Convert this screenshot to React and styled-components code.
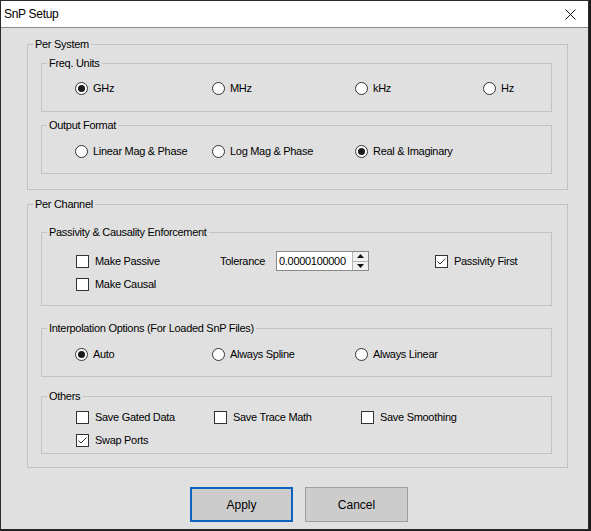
import React from "react";
import styled, { createGlobalStyle } from "styled-components";

const GlobalStyle = createGlobalStyle`
  html, body {
    margin: 0;
    padding: 0;
    background: #1c1c1c;
  }
  body {
    font-family: "Liberation Sans", Arial, sans-serif;
  }
`;

const Window = styled.div`
  width: 587px;
  height: 528px;
  border: 1px solid #2a2a2a;
  background: #e0e0e0;
  display: flex;
  flex-direction: column;
`;

const TitleBar = styled.div`
  height: 26px;
  background: #ffffff;
  border-bottom: 1px solid #8c8c8c;
  display: flex;
  align-items: center;
  justify-content: space-between;
  padding: 0 0 0 3px;
`;

const Title = styled.span`
  font-family: "Liberation Sans", Arial, sans-serif;
  font-size: 12px;
  letter-spacing: -0.3px;
  color: #000;
`;

const CloseButton = styled.div`
  width: 28px;
  height: 26px;
  display: flex;
  align-items: center;
  justify-content: center;
  margin-right: 4px;
`;

const Client = styled.div`
  flex: 1;
  display: flex;
  flex-direction: column;
  padding-top: 10px;
`;

const Group = styled.fieldset`
  margin: ${(p) => p.$top}px ${(p) => (p.$inner ? 15 : 20)}px 0
    ${(p) => (p.$inner ? 13 : 26)}px;
  padding: ${(p) => p.$padTop || 0}px 0 ${(p) => p.$padBottom || 0}px 0;
  min-width: 0;
  border: 1px solid #c3c3c3;
  display: flex;
  flex-direction: column;
  gap: ${(p) => p.$gap || 0}px;
`;

const Legend = styled.legend`
  margin-left: 5px;
  padding: 0 2px;
  font-size: 11px;
  line-height: 13px;
  letter-spacing: -0.3px;
  color: #000;
`;

const Row = styled.div`
  display: grid;
  grid-template-columns: ${(p) => p.$cols};
  align-items: center;
  height: ${(p) => p.$h || 16}px;
  padding-left: ${(p) => p.$indent || 33}px;
`;

const Option = styled.label`
  display: flex;
  align-items: center;
  gap: ${(p) => (p.$box ? 6 : 5)}px;
  font-size: 11px;
  letter-spacing: -0.3px;
  color: #000;
  white-space: nowrap;
  margin-left: ${(p) => (p.$box ? 1 : 0)}px;
`;

const RadioCircle = styled.span`
  width: 11px;
  height: 11px;
  border: 1px solid #333333;
  border-radius: 50%;
  background: #ffffff;
  display: flex;
  align-items: center;
  justify-content: center;
  flex: none;

  &::after {
    content: "";
    width: 7px;
    height: 7px;
    border-radius: 50%;
    background: #1a1a1a;
    display: ${(p) => (p.$on ? "block" : "none")};
  }
`;

const CheckBox = styled.span`
  width: 11px;
  height: 11px;
  border: 1px solid #333333;
  background: #ffffff;
  display: flex;
  align-items: center;
  justify-content: center;
  flex: none;
`;

const FieldLabel = styled.span`
  font-size: 11px;
  letter-spacing: -0.3px;
  color: #000;
`;

const SpinBox = styled.div`
  width: 91px;
  height: 18px;
  border: 1px solid #8a8a8a;
  background: #ffffff;
  display: flex;
`;

const SpinText = styled.span`
  flex: 1;
  font-size: 11px;
  letter-spacing: -0.3px;
  line-height: 18px;
  padding-left: 2px;
  color: #000;
`;

const SpinButtons = styled.div`
  width: 15px;
  display: flex;
  flex-direction: column;
  border-left: 1px solid #b5b5b5;
  background: #f0f0f0;
`;

const SpinHalf = styled.div`
  flex: 1;
  display: flex;
  align-items: center;
  justify-content: center;
  border-top: ${(p) => (p.$down ? "1px solid #b5b5b5" : "none")};
`;

const Buttons = styled.div`
  display: flex;
  gap: 12px;
  margin-top: 19px;
  padding-left: 189px;
`;

const Button = styled.button`
  width: 103px;
  height: 35px;
  box-sizing: border-box;
  background: #cccccc;
  border: ${(p) => (p.$default ? "2px solid #0a64c0" : "1px solid #9e9e9e")};
  font-family: "Liberation Sans", Arial, sans-serif;
  font-size: 12px;
  color: #000;
  padding: 0;
`;

const Radio = ({ on, children }) => (
  <Option>
    <RadioCircle $on={on} />
    {children}
  </Option>
);

const Check = ({ on, children }) => (
  <Option $box>
    <CheckBox>
      {on && (
        <svg width="11" height="11" viewBox="0 0 11 11">
          <path d="M1.5 5.5 L4 8 L9.5 2.5" fill="none" stroke="#3a3a3a" strokeWidth="1" />
        </svg>
      )}
    </CheckBox>
    {children}
  </Option>
);

const Arrow = ({ down }) => (
  <svg width="7" height="4" viewBox="0 0 7 4">
    <path d={down ? "M0 0 L7 0 L3.5 4 Z" : "M0 4 L7 4 L3.5 0 Z"} fill="#111" />
  </svg>
);

const App = () => {
  return (
    <>
      <GlobalStyle />
      <Window>
        <TitleBar>
          <Title>SnP Setup</Title>
          <CloseButton>
            <svg width="11" height="11" viewBox="0 0 11 11">
              <path d="M0.5 0.5 L10.5 10.5 M10.5 0.5 L0.5 10.5" stroke="#111" strokeWidth="1" />
            </svg>
          </CloseButton>
        </TitleBar>
        <Client>
          <Group $top={0} $padBottom={15}>
            <Legend>Per System</Legend>
            <Group $inner $top={6} $padTop={10} $padBottom={15}>
              <Legend>Freq. Units</Legend>
              <Row $cols="137px 143px 128px 1fr">
                <Radio on>GHz</Radio>
                <Radio>MHz</Radio>
                <Radio>kHz</Radio>
                <Radio>Hz</Radio>
              </Row>
            </Group>
            <Group $inner $top={7} $padTop={11} $padBottom={14}>
              <Legend>Output Format</Legend>
              <Row $cols="137px 143px 1fr">
                <Radio>Linear Mag &amp; Phase</Radio>
                <Radio>Log Mag &amp; Phase</Radio>
                <Radio on>Real &amp; Imaginary</Radio>
              </Row>
            </Group>
          </Group>

          <Group $top={8} $padBottom={13}>
            <Legend>Per Channel</Legend>
            <Group $inner $top={15} $padTop={12} $padBottom={11} $gap={3}>
              <Legend>Passivity &amp; Causality Enforcement</Legend>
              <Row $cols="145px 56px 93px 65px 1fr" $h={20} $indent={33}>
                <Check>Make Passive</Check>
                <FieldLabel>Tolerance</FieldLabel>
                <SpinBox>
                  <SpinText>0.0000100000</SpinText>
                  <SpinButtons>
                    <SpinHalf>
                      <Arrow />
                    </SpinHalf>
                    <SpinHalf $down>
                      <Arrow down />
                    </SpinHalf>
                  </SpinButtons>
                </SpinBox>
                <span />
                <Check on>Passivity First</Check>
              </Row>
              <Row $cols="1fr" $h={20} $indent={33}>
                <Check>Make Causal</Check>
              </Row>
            </Group>
            <Group $inner $top={16} $padTop={11} $padBottom={14}>
              <Legend>Interpolation Options (For Loaded SnP Files)</Legend>
              <Row $cols="137px 143px 1fr">
                <Radio on>Auto</Radio>
                <Radio>Always Spline</Radio>
                <Radio>Always Linear</Radio>
              </Row>
            </Group>
            <Group $inner $top={13} $padTop={6} $padBottom={5} $gap={7}>
              <Legend>Others</Legend>
              <Row $cols="138px 147px 1fr" $indent={33}>
                <Check>Save Gated Data</Check>
                <Check>Save Trace Math</Check>
                <Check>Save Smoothing</Check>
              </Row>
              <Row $cols="1fr" $indent={33}>
                <Check on>Swap Ports</Check>
              </Row>
            </Group>
          </Group>

          <Buttons>
            <Button $default>Apply</Button>
            <Button>Cancel</Button>
          </Buttons>
        </Client>
      </Window>
    </>
  );
};

export default App;
